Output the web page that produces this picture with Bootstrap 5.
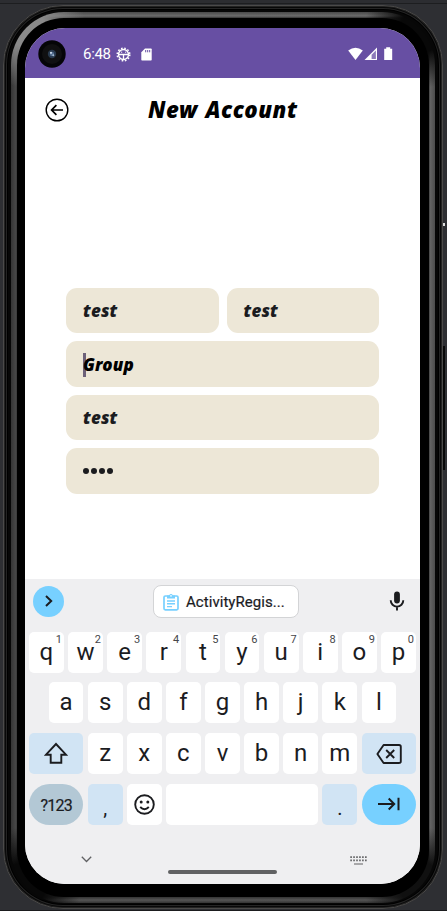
<!DOCTYPE html>
<html lang="en">
<head>
<meta charset="utf-8">
<meta name="viewport" content="width=device-width, initial-scale=1">
<title>New Account</title>
<link href="https://cdn.jsdelivr.net/npm/bootstrap@5.3.0/dist/css/bootstrap.min.css" rel="stylesheet">
<style>
html, body { height: 911px; overflow: hidden; }
body { background: #2e2f33; font-family: Roboto, sans-serif; color: #1b1c1f; border-top: 3px solid #2c2d31; }
svg { display: block; flex: none; }
.stage { height: 908px; padding: 1px 4px 3px 3px; border-top: 1px solid #1d1e20; border-bottom: 1px solid #1b1c1e; }
.phone { height: 904px; background: #070707; border: 1px solid #4b4a49; border-radius: 60px; padding: 6px 7px 5px 7px; box-shadow: inset 0 0 0 1px #222, inset 0 0 0 2px #080808, inset 0 0 0 3px #242424, inset 0 0 0 4px #000; }
.rim { height: 100%; border-radius: 53px; padding: 6px;
  background:
    radial-gradient(circle at 97% 2%, #080808 22px, transparent 58px),
    radial-gradient(circle at 97% 98%, #101010 22px, transparent 58px),
    radial-gradient(circle at 3% 98%, #080808 22px, transparent 58px),
    radial-gradient(circle at 4% 2%, #8a8a8a 18px, transparent 58px),
    linear-gradient(90deg, #353535, #484848 5px, transparent 6px),
    linear-gradient(270deg, #4c4c4c, #646464 5px, transparent 6px),
    linear-gradient(#4a4a4a, #6c6c6c 4px, #333 6px, #333 calc(100% - 6px), #555 calc(100% - 3px), #333); }
.bezel { height: 100%; background: #000; border-radius: 47px; padding: 10px 9px 12px 8px; }
.display-area { height: 856px; border-radius: 40px; background: #fff; overflow: hidden; }
.status { height: 50px; background: #674fa3; color: #fff; padding: 2px 27px 0 13px; }
.clock { font-size: 15px; line-height: 20px; margin-left: 17px; width: 26px; white-space: nowrap; letter-spacing: -.3px; }
.topbar { height: 64px; padding-left: 20px; }
.title { font: italic 900 22.2px/30px "Noto Sans", sans-serif; letter-spacing: .5px; word-spacing: 1.5px; color: #000; width: 311px; padding-left: 79px; margin: -1px 0 0; white-space: nowrap; }
.fields { margin-top: 146px; padding: 0 41px; gap: 8px; }
.field { height: 45.4px; background: #ede7d7; border-radius: 11px; padding: 1px 17px 0; font: italic 900 17px/24px "Noto Sans", sans-serif; letter-spacing: .15px; }
.caret { width: 2.5px; height: 24px; background: #6d6179; margin-right: -2.5px; }
.dots { gap: 2px; }
.dots i { width: 6px; height: 6px; border-radius: 50%; background: #1b1c1f; }
.keyboard { background: #efeff1; height: 305px; padding: 0 4px; margin-top: auto; }
.suggest { height: 44.5px; padding: 0 11px 0 4px; }
.expand { width: 31px; height: 31px; background: #77d0ff; }
.chip { width: 146px; height: 33px; border: 1px solid #d3d4d6; border-radius: 8px; background: #fff; padding: 2px 0 0 9px; font: 400 15px/20px Roboto, sans-serif; letter-spacing: .05px; gap: 7px; margin-left: 89px; margin-right: auto; white-space: nowrap; -webkit-text-stroke: .2px #1b1c1f; }
.keys { gap: 4.3px; height: 41.2px; margin-bottom: 9.6px; }
.key { flex: 0 0 34.83px; height: 41.2px; background: #fff; border-radius: 5px; font-size: 24px; line-height: 40.5px; text-align: center; position: relative; }
.key sup { position: absolute; right: 2px; top: 2px; font-size: 11px; line-height: 11px; color: #45464a; }
.key.wide { flex-basis: 54.4px; }
.key.soft { background: #d1e4f4; }
.key.round { border-radius: 21px; }
.center-key { display: flex; align-items: center; justify-content: center; }
.key.sym { background: #b3c8d5; font-size: 16px; line-height: 43px; letter-spacing: -.8px; -webkit-text-stroke: .2px #1b1c1f; }
.key.go { background: #77d0ff; }
.space { flex: 1; }
.key.punct { font-size: 20px; line-height: 48px; }
.foot { padding: 21px 49px 0 52px; }
.home { width: 109px; height: 4px; border-radius: 2px; background: #606163; margin: 14px 0 0 2px; }
.edge { position: absolute; right: 0; }
</style>
<script src="https://cdn.jsdelivr.net/npm/bootstrap@5.3.0/dist/js/bootstrap.bundle.min.js"></script>
</head>
<body>
<div class="stage">
 <div class="phone">
  <div class="rim">
   <div class="bezel">
   <div class="display-area d-flex flex-column">
    <div class="status d-flex align-items-center">
     <svg width="28" height="28" viewBox="0 0 28 28"><circle cx="14" cy="14" r="13.7" fill="#050507"/><circle cx="14" cy="14" r="10" fill="#101011"/><circle cx="14" cy="14" r="4.2" fill="#27384c"/><circle cx="14" cy="14" r="2.2" fill="#526d8f"/><circle cx="13" cy="12.8" r="1.1" fill="#c8d8e8"/><circle cx="15.3" cy="15.2" r="1" fill="#9eb6cc"/></svg>
     <span class="clock">6:48</span>
     <svg width="15" height="15" viewBox="0 0 15 15" fill="none" stroke="#fff" style="margin-left:7px"><circle cx="7.5" cy="7.5" r="5" stroke-width="1.3"/><circle cx="7.5" cy="7.5" r="6.3" stroke-width="1.5" stroke-dasharray="1.65 1.65"/><path d="M2.5 7.5h10M7.5 7.5V12" stroke-width="1.3"/><path d="M5 5.2h1.2M9 5.2h1.2" stroke-width="1"/></svg>
     <svg width="11" height="13" viewBox="0 0 11 13" style="margin-left:10px"><path d="M4 0.5h6q.7 0 .7.7v10.6q0 .7-.7.7H1q-.7 0-.7-.7V4.2z" fill="#fff"/><path d="M4.7 2v2.3M6.7 2v2.3M8.7 2v2.3" stroke="#674fa3"/></svg>
     <svg class="ms-auto" width="45" height="14" viewBox="0 0 45 14"><path d="M.2 3.5Q7.5-2.2 14.8 3.5L7.5 13z" fill="#fff"/><path d="M16.5 13L29 .6V13z" fill="#fff"/><path d="M23.6 7.700L27.9 3.4V12h-4.3z" fill="#674fa3" opacity=".75"/><path d="M36.2 1.8h2V.3h4v1.5h2V13h-8z" fill="#fff"/></svg>
    </div>
    <header class="topbar d-flex align-items-center">
     <svg width="24" height="24" viewBox="0 0 24 24" fill="none" stroke="#000" stroke-width="1.4"><circle cx="12" cy="12" r="10.8"/><path d="M18 12H6.8M11.4 7.2L6.6 12l4.8 4.8" stroke-width="1.7"/></svg>
     <h1 class="title">New Account</h1>
    </header>
    <main class="fields d-flex flex-column">
     <div class="d-flex gap-2">
      <div class="field flex-fill d-flex align-items-center">test</div>
      <div class="field flex-fill d-flex align-items-center">test</div>
     </div>
     <div class="field d-flex align-items-center text-black"><span class="caret"></span>Group</div>
     <div class="field d-flex align-items-center">test</div>
     <div class="field d-flex align-items-center dots"><i></i><i></i><i></i><i></i></div>
    </main>
    <section class="keyboard">
     <div class="suggest d-flex align-items-center">
      <div class="expand rounded-circle d-flex align-items-center justify-content-center"><svg width="10" height="14" viewBox="0 0 10 14" fill="none" stroke="#1b1c1f" stroke-width="2"><path d="M2 2l5.2 5L2 12"/></svg></div>
      <div class="chip d-flex align-items-center"><svg width="16" height="18" viewBox="0 0 16 18"><rect x="1" y="3" width="14" height="13.8" rx="1.3" fill="none" stroke="#77d0ff" stroke-width="1.7"/><path d="M4 2.4h2.2a1.9 1.9 0 0 1 3.6 0H12v3H4z" fill="#77d0ff"/><circle cx="8" cy="2.9" r=".8" fill="#fff"/><path d="M4 8h8M4 10.8h8M4 13.6h5" stroke="#77d0ff" stroke-width="1.4"/></svg>ActivityRegis...</div>
      <svg width="16" height="20" viewBox="0 0 16 20" fill="none" stroke="#1b1c1f"><path d="M8 3.5v6" stroke-width="5.8" stroke-linecap="round"/><path d="M1.7 9.3a6.3 6.3 0 0 0 12.6 0M8 15.5v4" stroke-width="1.9"/></svg>
     </div>
     <div class="keys d-flex mt-2">
      <div class="key">q<sup>1</sup></div><div class="key">w<sup>2</sup></div><div class="key">e<sup>3</sup></div><div class="key">r<sup>4</sup></div><div class="key">t<sup>5</sup></div><div class="key">y<sup>6</sup></div><div class="key">u<sup>7</sup></div><div class="key">i<sup>8</sup></div><div class="key">o<sup>9</sup></div><div class="key">p<sup>0</sup></div>
     </div>
     <div class="keys d-flex justify-content-center">
      <div class="key">a</div><div class="key">s</div><div class="key">d</div><div class="key">f</div><div class="key">g</div><div class="key">h</div><div class="key">j</div><div class="key">k</div><div class="key">l</div>
     </div>
     <div class="keys d-flex">
      <div class="key wide soft center-key"><svg width="24" height="23" viewBox="0 0 24 23" fill="none" stroke="#1b1c1f" stroke-width="1.9"><path d="M12 2L22 12.7h-4.7v8.1H6.7v-8.1H2z"/></svg></div>
      <div class="key">z</div><div class="key">x</div><div class="key">c</div><div class="key">v</div><div class="key">b</div><div class="key">n</div><div class="key">m</div>
      <div class="key wide soft center-key"><svg width="26" height="20" viewBox="0 0 26 20" fill="none" stroke="#1b1c1f" stroke-width="1.9"><path d="M7.6 1H23q1.8 0 1.8 1.8v14.4Q24.8 19 23 19H7.6L1.4 10z" stroke-linejoin="round"/><path d="M10.2 6l8 8M18.2 6l-8 8"/></svg></div>
     </div>
     <div class="keys d-flex">
      <div class="key wide round sym">?123</div>
      <div class="key soft punct">,</div>
      <div class="key center-key"><svg width="21" height="21" viewBox="0 0 21 21" fill="none" stroke="#1b1c1f" stroke-width="1.9"><circle cx="10.5" cy="10.5" r="9.3"/><path d="M6.2 13q4.3 4.4 8.6 0"/><circle cx="7.2" cy="8" r="1.5" fill="#1b1c1f" stroke="none"/><circle cx="13.8" cy="8" r="1.5" fill="#1b1c1f" stroke="none"/></svg></div>
      <div class="key space"></div>
      <div class="key soft punct">.</div>
      <div class="key wide round go center-key"><svg width="23" height="14" viewBox="0 0 23 14" fill="none" stroke="#1b1c1f" stroke-width="2"><path d="M1 7h16M11.7 1.5L17.2 7l-5.5 5.5M21.5.8v12.4"/></svg></div>
     </div>
     <div class="foot d-flex justify-content-between align-items-start">
      <svg width="11" height="7" viewBox="0 0 11 7" fill="none" stroke="#606163" stroke-width="1.3"><path d="M.8.8l4.7 4.7 4.7-4.7"/></svg>
      <div class="home"></div>
      <svg width="17" height="9" viewBox="0 0 17 9" stroke="#606163"><path d="M.3 1.1h16.4M.3 4.4h16.4" stroke-width="1.6" stroke-dasharray="1.6 1.35"/><path d="M4 8h9" stroke-width="1.2"/></svg>
     </div>
    </section>
   </div>
   </div>
  </div>
 </div>
</div>
<div class="edge" style="top:223px;height:3px;width:2px;margin-right:2px;background:#ddd"></div>
<div class="edge" style="top:346px;height:124px;width:2px;margin-right:2px;background:#080808"></div>
</body>
</html>
